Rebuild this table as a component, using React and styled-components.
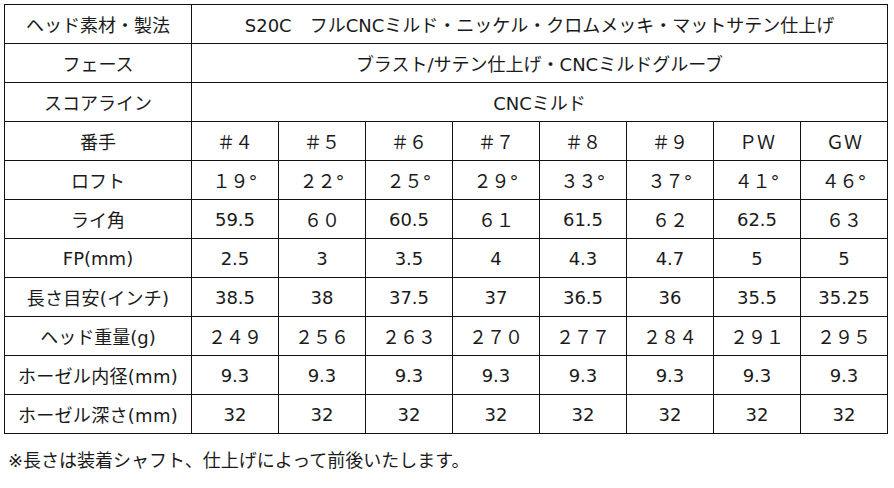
import styled, { createGlobalStyle } from "styled-components";

const GlobalStyle = createGlobalStyle`
  html, body {
    margin: 0;
    padding: 0;
    background: #fff;
  }
  body {
    font-family: "DejaVu Sans", "Noto Sans CJK JP", sans-serif;
    color: #1a1a1a;
  }
`;

const Page = styled.div`
  padding: 4px 0 0 4px;
  width: 894px;
  height: 488px;
  box-sizing: border-box;
`;

const Table = styled.table`
  border-collapse: collapse;
  table-layout: fixed;
  width: 884px;
  font-size: 18px;
`;

const Col = styled.col`
  width: ${(p) => (p.$label ? "187px" : "87px")};
`;

const Row = styled.tr`
  height: 39px;
`;

const Label = styled.td`
  border: 1px solid #111;
  text-align: center;
  padding: 0;
  white-space: nowrap;
  letter-spacing: ${(p) => (p.$wide ? "0.3px" : "0")};
`;

const Cell = styled.td`
  border: 1px solid #111;
  text-align: center;
  padding: 0;
  white-space: nowrap;
`;

const Note = styled.p`
  margin: 15px 0 0 4px;
  font-size: 18px;
  line-height: 24px;
`;

const wideRows = [
  ["ヘッド素材・製法", "S20C　フルCNCミルド・ニッケル・クロムメッキ・マットサテン仕上げ"],
  ["フェース", "ブラスト/サテン仕上げ・CNCミルドグルーブ"],
  ["スコアライン", "CNCミルド"],
];

const specRows = [
  ["番手", ["＃４", "＃５", "＃６", "＃７", "＃８", "＃９", "ＰＷ", "ＧＷ"]],
  ["ロフト", ["１９°", "２２°", "２５°", "２９°", "３３°", "３７°", "４１°", "４６°"]],
  ["ライ角", ["59.5", "６０", "60.5", "６１", "61.5", "６２", "62.5", "６３"]],
  ["FP(mm)", ["2.5", "3", "3.5", "4", "4.3", "4.7", "5", "5"]],
  ["長さ目安(インチ)", ["38.5", "38", "37.5", "37", "36.5", "36", "35.5", "35.25"]],
  ["ヘッド重量(g)", ["２４９", "２５６", "２６３", "２７０", "２７７", "２８４", "２９１", "２９５"]],
  ["ホーゼル内径(mm)", ["9.3", "9.3", "9.3", "9.3", "9.3", "9.3", "9.3", "9.3"]],
  ["ホーゼル深さ(mm)", ["32", "32", "32", "32", "32", "32", "32", "32"]],
];

export default function App() {
  return (
    <Page>
      <GlobalStyle />
      <Table>
        <colgroup>
          <Col $label />
          {Array.from({ length: 8 }, (_, i) => (
            <Col key={i} />
          ))}
        </colgroup>
        <tbody>
          {wideRows.map(([label, value]) => (
            <Row key={label}>
              <Label>{label}</Label>
              <Cell colSpan={8}>{value}</Cell>
            </Row>
          ))}
          {specRows.map(([label, values]) => (
            <Row key={label}>
              <Label $wide={label.length > 8}>{label}</Label>
              {values.map((v, i) => (
                <Cell key={i}>{v}</Cell>
              ))}
            </Row>
          ))}
        </tbody>
      </Table>
      <Note>※長さは装着シャフト、仕上げによって前後いたします。</Note>
    </Page>
  );
}
